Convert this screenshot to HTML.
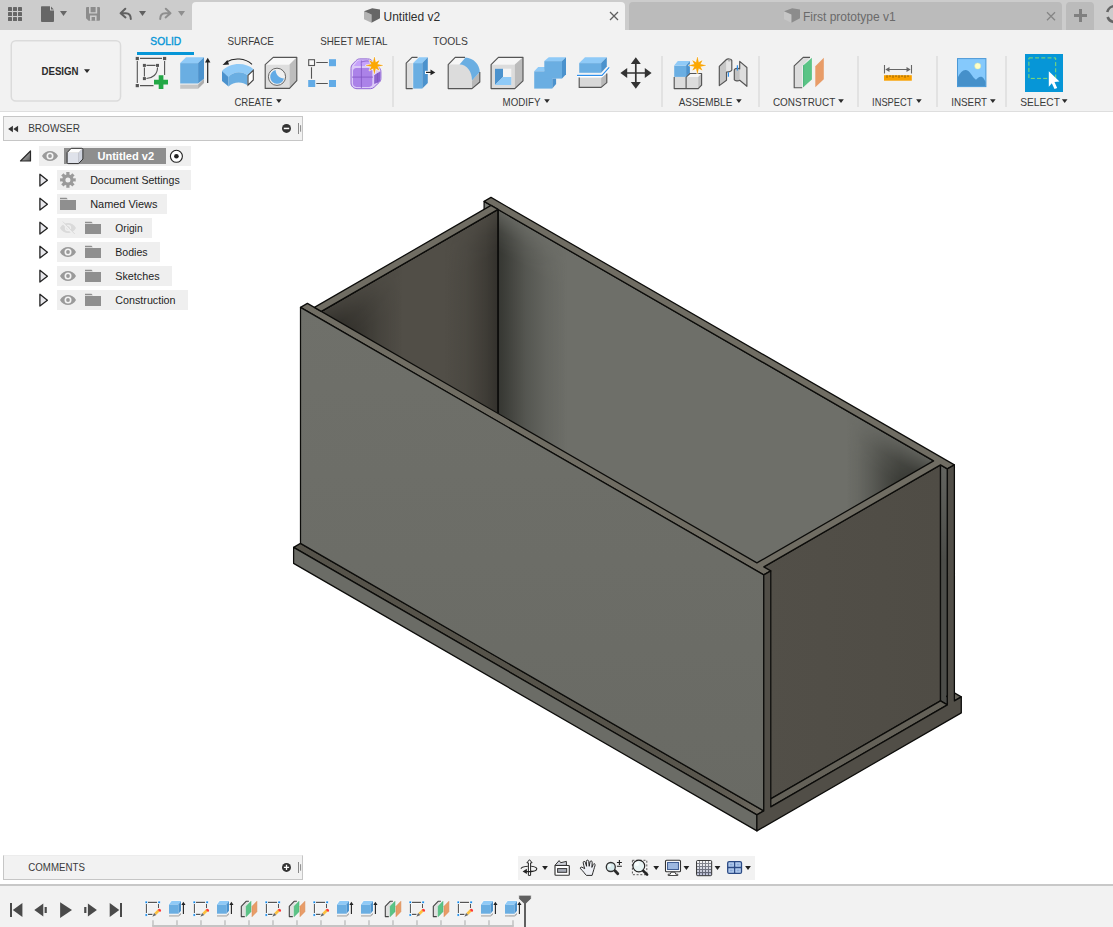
<!DOCTYPE html>
<html lang="en">
<head>
<meta charset="utf-8">
<title>Untitled v2</title>
<style>
*{box-sizing:border-box;margin:0;padding:0}
html,body{width:1113px;height:927px;overflow:hidden;background:#fff}
body{position:relative;font-family:"Liberation Sans",sans-serif;font-size:10.67px;color:#2b2b2b;-webkit-font-smoothing:antialiased}
.abs{position:absolute}
#topbar{position:absolute;left:0;top:0;width:1113px;height:30px;background:#cccccc}
.tab{position:absolute;top:2px;height:28px;border-radius:4px 4px 0 0}
.tab.active{left:192px;width:433px;background:#f2f2f2}
.tab.inactive{left:629px;width:433px;background:#bbbbbb}
.tab.plus{left:1066px;width:28px;background:#bbbbbb}
.tabtitle{position:absolute;top:9.5px;font-size:12px;line-height:14px;white-space:nowrap}
#toolbar{position:absolute;left:0;top:30px;width:1113px;height:82px;background:#f2f2f2;border-bottom:1px solid #dedede}
.wtab{position:absolute;top:6px;font-size:10.67px;line-height:12px;letter-spacing:-0.1px;color:#3a3a3a;white-space:nowrap;transform-origin:0 50%}
.glabel{position:absolute;top:66.5px;font-size:10.67px;line-height:12px;color:#2b2b2b;white-space:nowrap;transform-origin:0 50%}
.dd{position:absolute;width:0;height:0;border-left:3px solid transparent;border-right:3px solid transparent;border-top:4px solid #2b2b2b}
.sep{position:absolute;top:26px;width:2px;height:51px;background:#e2e2e2}
svg{overflow:visible}
.ico{position:absolute;left:0;top:0}
#browserhdr{position:absolute;left:3px;top:116px;width:300px;height:25px;background:#f2f2f2;border:1px solid #c6c6c6}
.row{position:absolute;left:57px;height:20px;background:#efefef}
.rowtxt{position:absolute;font-size:10.67px;line-height:12px;color:#1e1e1e;white-space:nowrap}
#comments{position:absolute;left:3px;top:855px;width:300px;height:25px;background:#f2f2f2;border:1px solid #c6c6c6;border-top-color:#ececec}
#navbar{position:absolute;left:518px;top:856px;width:237px;height:24px;background:#f2f2f2}
#timeline{position:absolute;left:0;top:884px;width:1113px;height:43px;background:#f2f2f2;border-top:2px solid #c8c8c8}
.hdrtxt{position:absolute;font-size:10.67px;line-height:12px;color:#3a3a3a;white-space:nowrap;transform-origin:0 50%}
</style>
</head>
<body>
<div id="topbar">
  <div class="tab active"></div>
  <div class="tab inactive"></div>
  <div class="tab plus"></div>
  <div class="tabtitle" style="left:383.5px;color:#2e2e2e">Untitled v2</div>
  <div class="tabtitle" style="left:803px;color:#6a6a6a">First prototype v1</div>
  <svg class="ico" width="1113" height="30" viewBox="0 0 1113 30">
    <!-- app grid -->
    <g fill="#666">
      <rect x="8" y="7" width="4" height="4" rx=".6"/><rect x="13" y="7" width="4" height="4" rx=".6"/><rect x="18" y="7" width="4" height="4" rx=".6"/>
      <rect x="8" y="12" width="4" height="4" rx=".6"/><rect x="13" y="12" width="4" height="4" rx=".6"/><rect x="18" y="12" width="4" height="4" rx=".6"/>
      <rect x="8" y="17" width="4" height="4" rx=".6"/><rect x="13" y="17" width="4" height="4" rx=".6"/><rect x="18" y="17" width="4" height="4" rx=".6"/>
    </g>
    <!-- file -->
    <path fill="#666" d="M42 6.2h8v4.2h4V21a.9.9 0 0 1-.9.9H41.9A.9.9 0 0 1 41 21V7.1a.9.9 0 0 1 1-.9z"/>
    <path fill="#666" d="M51 6.6l2.8 2.9H51z"/>
    <path fill="#666" d="M60 11h7l-3.5 5z"/>
    <!-- save -->
    <path fill="#8c8c8c" d="M87 7h12a1 1 0 0 1 1 1v11.8a1 1 0 0 1-1 1H88.6L86 18.3V8a1 1 0 0 1 1-1z"/>
    <path fill="#cccccc" d="M89 7h1.6v5.2h5V7H97.2v6.6H89zM90 15.4h6.6v5.4H95v-3.9h-3.4v3.9H90z"/>
    <!-- undo -->
    <path fill="none" stroke="#606060" stroke-width="2" stroke-linecap="round" stroke-linejoin="round" d="M125.3 8.8l-4.7 4.4 4.9 4.2M121.2 13.2h4.6c3 0 5 2.2 5 5.9"/>
    <path fill="#606060" d="M139 11h7l-3.5 5z"/>
    <!-- redo -->
    <path fill="none" stroke="#8e8e8e" stroke-width="2" stroke-linecap="round" stroke-linejoin="round" d="M165.8 8.8l4.7 4.4-4.9 4.2M169.8 13.2h-4.6c-3 0-5 2.2-5 5.9"/>
    <path fill="#8e8e8e" d="M178 11h7l-3.5 5z"/>
    <!-- active tab cube -->
    <g>
      <path fill="#b4b4b4" d="M364 11.2l7.5 3.3v8.3L364 19.3z"/>
      <path fill="#666" d="M364 11.2l8.2-3 7.8 1.4-8.5 4.9zM371.5 14.5l8.5-4.9v8.6l-8.5 4.6z"/>
    </g>
    <!-- inactive tab cube -->
    <g>
      <path fill="#c6c6c6" d="M784 11.2l7.5 3.3v8.3L784 19.3z"/>
      <path fill="#8c8c8c" d="M784 11.2l8.2-3 7.8 1.4-8.5 4.9zM791.5 14.5l8.5-4.9v8.6l-8.5 4.6z"/>
    </g>
    <!-- close x -->
    <path stroke="#5e5e5e" stroke-width="1.25" fill="none" d="M610 12l8 8M618 12l-8 8"/>
    <path stroke="#858585" stroke-width="1.3" fill="none" d="M1047 12.3l8 8M1055 12.3l-8 8"/>
    <!-- plus -->
    <path fill="#808080" d="M1079 9h3v5h5v3h-5v5h-3v-5h-5v-3h5z"/>
    <!-- partial refresh icon -->
    <circle cx="1115" cy="14" r="8" fill="none" stroke="#666" stroke-width="2.6" stroke-dasharray="22 5"/>
  </svg>
</div>
<svg id="model" width="1113" height="927" viewBox="0 0 1113 927" style="position:absolute;left:0;top:0">
<defs>
<linearGradient id="aoBackX" gradientUnits="userSpaceOnUse" x1="497.5" y1="0" x2="933.6" y2="0">
<stop offset="0" stop-color="#1c1d19" stop-opacity=".7"/><stop offset="0.02" stop-color="#1c1d19" stop-opacity=".58"/><stop offset="0.065" stop-color="#1c1d19" stop-opacity=".3"/><stop offset="0.11" stop-color="#1c1d19" stop-opacity=".12"/><stop offset="0.16" stop-color="#1c1d19" stop-opacity="0"/>
<stop offset="0.80" stop-color="#1c1d19" stop-opacity="0"/><stop offset="0.825" stop-color="#1c1d19" stop-opacity=".07"/><stop offset="0.855" stop-color="#1c1d19" stop-opacity=".22"/><stop offset="0.89" stop-color="#1c1d19" stop-opacity=".44"/><stop offset="0.925" stop-color="#1c1d19" stop-opacity=".64"/><stop offset="0.96" stop-color="#1c1d19" stop-opacity=".76"/><stop offset="1" stop-color="#1c1d19" stop-opacity=".82"/>
</linearGradient>
<linearGradient id="aoLeftX" gradientUnits="userSpaceOnUse" x1="321.4" y1="0" x2="497.9" y2="0">
<stop offset="0" stop-color="#161512" stop-opacity=".78"/><stop offset="0.1" stop-color="#161512" stop-opacity=".62"/><stop offset="0.22" stop-color="#161512" stop-opacity=".4"/><stop offset="0.34" stop-color="#161512" stop-opacity=".16"/><stop offset="0.46" stop-color="#161512" stop-opacity="0"/>
<stop offset="0.7" stop-color="#161512" stop-opacity="0"/><stop offset="0.82" stop-color="#161512" stop-opacity=".1"/><stop offset="0.93" stop-color="#161512" stop-opacity=".3"/><stop offset="1" stop-color="#161512" stop-opacity=".5"/>
</linearGradient>
<linearGradient id="mgB" gradientUnits="userSpaceOnUse" x1="933.6" y1="461.9" x2="916.1" y2="492.2">
<stop offset="0" stop-color="#3c3c3c"/><stop offset="0.5" stop-color="#c8c8c8"/><stop offset="1" stop-color="#fff"/>
</linearGradient>
<linearGradient id="mgL" gradientUnits="userSpaceOnUse" x1="321.4" y1="311.5" x2="339.4" y2="342.7">
<stop offset="0" stop-color="#4a4a4a"/><stop offset="0.5" stop-color="#c8c8c8"/><stop offset="1" stop-color="#fff"/>
</linearGradient>
<mask id="mB" maskUnits="userSpaceOnUse" x="0" y="0" width="1113" height="927"><rect width="1113" height="927" fill="url(#mgB)"/></mask>
<mask id="mL" maskUnits="userSpaceOnUse" x="0" y="0" width="1113" height="927"><rect width="1113" height="927" fill="url(#mgL)"/></mask>
<linearGradient id="gRec" gradientUnits="userSpaceOnUse" x1="0" y1="466" x2="0" y2="560"><stop offset="0" stop-color="#63645f"/><stop offset="1" stop-color="#4c4d49"/></linearGradient>
<linearGradient id="gStrip" gradientUnits="userSpaceOnUse" x1="764" y1="0" x2="640" y2="0"><stop offset="0" stop-color="#736f65"/><stop offset="0.2" stop-color="#635f56"/><stop offset="0.55" stop-color="#59564d"/><stop offset="1" stop-color="#56534a"/></linearGradient>
<linearGradient id="gFront" gradientUnits="userSpaceOnUse" x1="0" y1="300" x2="0" y2="820">
<stop offset="0" stop-color="#6f706a"/><stop offset="1" stop-color="#696a64"/>
</linearGradient>
<linearGradient id="gRight" gradientUnits="userSpaceOnUse" x1="764" y1="0" x2="941" y2="0">
<stop offset="0" stop-color="#524f48"/><stop offset="1" stop-color="#4f4c45"/>
</linearGradient>
</defs>
<g stroke="#0c0c0a" stroke-width="1.25" stroke-linejoin="round" stroke-linecap="round">
<polygon fill="#6e6f69" points="933.6,696.9 498.0,445.4 498.0,209.4 933.6,460.9"/>
<polygon fill="url(#aoBackX)" stroke="none" mask="url(#mB)" points="933.6,696.9 498.0,445.4 498.0,209.4 933.6,460.9"/>
<polygon fill="#514e47" points="321.3,547.4 498.0,445.4 498.0,209.4 321.3,311.4"/>
<polygon fill="url(#aoLeftX)" stroke="none" mask="url(#mL)" points="321.3,547.4 498.0,445.4 498.0,209.4 321.3,311.4"/>
<polygon fill="none" points="321.3,547.4 498.0,445.4 498.0,209.4 321.3,311.4"/>
<polygon fill="#7a7c77" points="484.1,201.4 491.0,205.4 491.0,213.4 484.1,217.4"/>
<polygon fill="url(#gRight)" points="763.8,802.9 940.5,700.9 940.5,464.9 763.8,566.9"/>
<polygon fill="url(#gRec)" points="947.4,704.9 940.5,700.9 940.5,464.9 947.4,468.9"/>
<polygon fill="#646158" points="770.8,806.9 763.8,802.9 940.5,700.9 947.4,704.9"/>
<polygon fill="#6a675e" points="961.3,696.9 954.4,700.9 946.6,696.4 953.5,692.4"/>
<polygon fill="url(#gStrip)" points="756.9,814.9 293.6,547.4 300.5,543.4 763.8,810.9"/>
<polygon fill="#706d63" points="763.8,574.9 300.5,307.4 307.4,303.4 756.9,562.9 933.6,460.9 484.1,201.4 491.0,197.4 954.4,464.9 947.4,468.9 940.5,464.9 763.8,566.9 770.8,570.9"/>
<polygon fill="#706d63" points="321.3,311.4 314.4,307.4 491.0,205.4 498.0,209.4"/>
<polygon fill="url(#gFront)" points="763.8,810.9 300.5,543.4 300.5,307.4 763.8,574.9"/>
<polygon fill="#6b6c66" points="756.9,830.9 293.6,563.4 293.6,547.4 756.9,814.9"/>
<polygon fill="#514e47" points="756.9,830.9 961.3,712.9 961.3,696.9 954.4,700.9 954.4,464.9 947.4,468.9 947.4,704.9 770.8,806.9 770.8,570.9 763.8,574.9 763.8,810.9 756.9,814.9"/>
</g></svg>
<div id="toolbar">
    <div class="abs" style="left:137px;top:21.500px;width:57px;height:3px;background:#0696d7"></div>
  <div class="sep" style="left:392px"></div>
  <div class="sep" style="left:661px"></div>
  <div class="sep" style="left:758px"></div>
  <div class="sep" style="left:857px"></div>
  <div class="sep" style="left:936px"></div>
  <div class="sep" style="left:1005px"></div>
  <div class="abs" style="left:1025px;top:24px;width:38px;height:38px;background:#0696d7"></div>
</div>
<svg class="ico" width="1113" height="112" viewBox="0 0 1113 112" font-family="Liberation Sans, sans-serif" font-size="10.67">
  <rect x="11.250" y="40.750" width="109.300" height="60.300" rx="4.500" fill="none" stroke="#dbdbdb" stroke-width="1.500"/>
  <g fill="#3a3a3a">
    <text x="41.500" y="75.300" font-weight="bold" font-size="11.300" fill="#2b2b2b" textLength="37" lengthAdjust="spacingAndGlyphs">DESIGN</text>
    <text x="150.300" y="44.900" fill="#0696d7" stroke="#0696d7" stroke-width=".35" textLength="30.900" lengthAdjust="spacingAndGlyphs">SOLID</text>
    <text x="227.400" y="44.900" textLength="46.400" lengthAdjust="spacingAndGlyphs">SURFACE</text>
    <text x="320.200" y="44.900" textLength="67.400" lengthAdjust="spacingAndGlyphs">SHEET METAL</text>
    <text x="433.100" y="44.900" textLength="34.700" lengthAdjust="spacingAndGlyphs">TOOLS</text>
    <text x="234.400" y="105.900" textLength="38.100" lengthAdjust="spacingAndGlyphs">CREATE</text>
    <text x="502.600" y="105.900" textLength="37.800" lengthAdjust="spacingAndGlyphs">MODIFY</text>
    <text x="678.700" y="105.900" textLength="53.600" lengthAdjust="spacingAndGlyphs">ASSEMBLE</text>
    <text x="772.900" y="105.900" textLength="62.400" lengthAdjust="spacingAndGlyphs">CONSTRUCT</text>
    <text x="872.100" y="105.900" textLength="40.300" lengthAdjust="spacingAndGlyphs">INSPECT</text>
    <text x="951.200" y="105.900" textLength="35.900" lengthAdjust="spacingAndGlyphs">INSERT</text>
    <text x="1020.200" y="105.900" textLength="39.700" lengthAdjust="spacingAndGlyphs">SELECT</text>
  </g>
  <g fill="#2b2b2b">
    <path d="M84 69.300h6l-3 3.600z"/>
    <path d="M276.100 99.300h5.600l-2.800 3.600z"/><path d="M544.200 99.300h5.600l-2.800 3.600z"/><path d="M736.100 99.300h5.600l-2.800 3.600z"/>
    <path d="M838.200 99.300h5.600l-2.800 3.600z"/><path d="M916.100 99.300h5.600l-2.800 3.600z"/><path d="M990 99.300h5.600l-2.800 3.600z"/><path d="M1061.900 99.300h5.600l-2.800 3.600z"/>
  </g>
<g stroke="#555" stroke-width="1.100" fill="none">
<path d="M140 58.400h22M137.300 61v22M140 85.600h13.500M164.600 61v14"/>
<path d="M146.500 65.400h9M144.400 67.500v9M157.500 67.500c0 7-5 10.600-11 11"/></g>
<g fill="#555"><rect x="135.700" y="56.900" width="3.200" height="3.200"/><rect x="163" y="56.900" width="3.200" height="3.200"/><rect x="135.700" y="84" width="3.200" height="3.200"/>
<rect x="142.900" y="63.900" width="3" height="3"/><rect x="156" y="63.900" width="3" height="3"/><rect x="142.900" y="77.100" width="3" height="3"/></g>
<path fill="#22a845" d="M158.700 75.200h4.700v4.500h4.600v4.700h-4.600v4.500h-4.700v-4.500h-4.700v-4.700h4.700z"/>
<path fill="#c6c6c6" d="M180.200 84.600h17.900v4.200h-17.900z"/><path fill="#adadad" d="M198.100 84.600l5.900-5.800v4.200l-5.900 5.800z"/>
<path fill="#6aaee2" d="M180.200 63.100h17.900v20.400h-17.900z"/><path fill="#8fcaf7" d="M180.200 63.100l5.800-5.800h18l-5.900 5.800z"/><path fill="#4b92cd" d="M198.100 63.100l5.900-5.800v21.500l-5.900 4.700z"/>
<path stroke="#222" stroke-width="1.200" fill="none" d="M207.700 83V60"/><path fill="#222" d="M207.700 57.800l2.700 4.800h-5.400z"/>
<path fill="#8fcaf7" d="M222 71c8-9 24-9 31.800-1.500l-6.300 6c-5-4.500-14-4.500-19 1.500z"/>
<path fill="#4b92cd" d="M222 71l6.500 6v9.500l-6.500-5.500z"/>
<path fill="#6aaee2" d="M228.500 77c5-6 14-6 19-1.500v9.800c-5-4-14-4-19 1.200z"/>
<path fill="#fff" stroke="#444" stroke-width="1.100" d="M248 75.300l5.300-5v9.700l-5.300 5.200z"/>
<path fill="none" stroke="#222" stroke-width="1.100" d="M252 64.300c-7-6.200-18-7-25.500-2.300"/><path fill="#222" d="M222.600 64.900l4.800-5 1.700 4.600z"/>
<path fill="#dedede" d="M265.200 64.600h24.300v23.800h-24.300z"/><path fill="#f8f8f8" d="M265.200 64.600l8-7.300h23.600l-7.300 7.300z"/><path fill="#bdbdbd" d="M289.500 64.600l7.300-7.300v23.300l-7.300 7.800z"/>
<path fill="none" stroke="#555" stroke-width="1.150" stroke-linejoin="round" d="M265.200 64.600l8-7.300h23.600v23.300l-7.300 7.800h-24.300z"/>
<circle cx="277" cy="76.800" r="8.600" fill="#f0f0f0" stroke="#666" stroke-width="1"/>
<path fill="#62abe6" d="M275.600 70a7 7 0 1 0 8.400 8.500c-4.700-.3-8.300-3.800-8.400-8.500z"/>
<g stroke="#555" stroke-width="1.100" fill="none"><path d="M316.300 62.500h11.500M311.500 67.200v11.500M316.300 83.500h11.500"/></g>
<rect x="308.700" y="59.700" width="5.800" height="5.800" fill="#fafafa" stroke="#555" stroke-width="1.100"/>
<g fill="#62abe6"><rect x="329" y="59.200" width="7" height="7"/><rect x="308.200" y="80" width="7" height="7"/><rect x="329" y="80" width="7" height="7"/></g>
<path fill="#dccaf8" stroke="#9064d4" stroke-width="1" stroke-linejoin="round" d="M359.500 58.900h8c1.500 0 2.500.3 3.500 1l8 7.500c1.200 1.200 1.900 2.500 1.900 4.200v7c0 1.500-.6 2.800-1.700 3.800l-5 4.800c-1 1-2.300 1.500-3.800 1.500h-13.400c-3.300 0-6-2.500-6-5.800v-14.500c0-1.800.6-3.200 1.800-4.400l3.200-3.300c1-1.100 2.100-1.800 3.500-1.800z"/>
<path fill="#c6a2fa" d="M360 60.200h7.300c1.200 0 2 .3 2.800 1l5 4.700h-21.200l2.800-3.900c.8-1.100 1.900-1.800 3.300-1.800z"/>
<path fill="#ab82e8" d="M353 71c0-1.800 1.400-3.100 3.200-3.100h13c1.800 0 3.100 1.300 3.100 3.100v12.800c0 1.800-1.300 3.100-3.100 3.100h-13c-1.800 0-3.200-1.300-3.200-3.100z"/>
<path fill="#8c63cf" d="M374.200 75l6-3.600v8.300c0 1-.3 1.700-1 2.400l-5 1.800z"/>
<path fill="none" stroke="#8156c4" stroke-width=".8" d="M361.400 60.500c-.3 2-.1 3.500 0 5.500v22M352 77.100h21M377.500 73v9.500M361.600 62c3-1.200 6-1.300 9-.7"/>
<path fill="none" stroke="#fff" stroke-opacity=".75" stroke-width="1.800" stroke-linejoin="round" d="M374.40 57.10 L375.59 62.54 L379.21 60.59 L377.26 64.21 L382.70 65.40 L377.26 66.59 L379.21 70.21 L375.59 68.26 L374.40 73.70 L373.21 68.26 L369.59 70.21 L371.54 66.59 L366.10 65.40 L371.54 64.21 L369.59 60.59 L373.21 62.54Z"/><path fill="#fda800" stroke="#ea9600" stroke-width=".35" d="M374.40 57.10 L375.59 62.54 L379.21 60.59 L377.26 64.21 L382.70 65.40 L377.26 66.59 L379.21 70.21 L375.59 68.26 L374.40 73.70 L373.21 68.26 L369.59 70.21 L371.54 66.59 L366.10 65.40 L371.54 64.21 L369.59 60.59 L373.21 62.54Z"/>
<path fill="#dedede" d="M406.200 63.100h6.500v25.500h-6.500z"/><path fill="#f4f4f4" d="M406.200 63.100l5.800-5.800h5.500l-4.800 5.800z"/>
<path fill="none" stroke="#555" stroke-width="1.150" stroke-linejoin="round" d="M412.700 88.600h-6.500v-25.500l5.800-5.800h5.500"/>
<path fill="#6aaee2" d="M413.200 63.100h9.100v25.500h-9.100z"/><path fill="#8fcaf7" d="M413.200 63.100l5.800-5.800h8.800l-5.500 5.800z"/><path fill="#4b92cd" d="M422.300 63.100l5.500-5.800v25.700l-5.500 5.600z"/>
<path fill="#fff" d="M425 70.800h6v3.200h-6z"/><path stroke="#222" stroke-width="1.200" d="M426 72.400h6"/><path fill="#222" d="M435.300 72.400l-4.800 2.800v-5.600z"/>
<path fill="#b8b8b8" d="M472 80.500l7.800-8.500v10l-7.800 6.600z"/>
<path fill="#f6f6f6" d="M448.200 64.600l7-7.300h10l-5 7.300z"/>
<path fill="#dcdcdc" d="M448.200 64.600h11c7.500 0 12.800 6 12.800 14v10h-23.800z"/>
<path fill="#6aaee2" d="M459.500 64.400l6-7c8 .5 14.300 7 14.300 14.600l-7.800 8.500c0-9-5-16-12.500-16.100z"/>
<path fill="none" stroke="#555" stroke-width="1.150" stroke-linejoin="round" d="M465 57.300h-9.800l-7 7.300v24h23.800l7.800-6.600v-10"/>
<path fill="#dcdcdc" d="M491.100 64.600h23.700v24h-23.700z"/><path fill="#f6f6f6" d="M491.100 64.600l7.300-7.300h24.600l-8.200 7.300z"/><path fill="#bcbcbc" d="M514.800 64.600l8.200-7.300v23.500l-8.200 7.800z"/>
<path fill="none" stroke="#555" stroke-width="1.150" stroke-linejoin="round" d="M491.100 64.600l7.300-7.300h24.600v23.500l-8.200 7.800h-23.700z"/>
<path fill="#f4f4f4" d="M495 68.700h16.300v16.300h-16.300z"/><path fill="#4b92cd" d="M495 68.700h8v8.300l-8 8z"/><path fill="#8fcaf7" d="M503 77h8.300v8h-16.300z"/>
<path fill="#8fcaf7" d="M534.200 71.300l4-4.300h7l-1 4.300z"/><path fill="#6aaee2" d="M534.200 71.300h18.100v17.300h-18.100z"/><path fill="#4b92cd" d="M552.300 78.600h3.800v5.500l-3.800 4.500z"/>
<path fill="#6aaee2" d="M544.300 61.100h17.700v17.500h-17.700z"/><path fill="#8fcaf7" d="M544.300 61.100l4.500-3.800h17.200l-4 3.800z"/><path fill="#4b92cd" d="M562 61.100l4-3.800v16.900l-4 4.400z"/>
<path fill="#d8d8d8" d="M579.200 77.900h21.900v9.500h-21.900z"/><path fill="#b8b8b8" d="M601.100 77.900l5.700-4.500v9.200l-5.700 4.800z"/>
<path fill="none" stroke="#555" stroke-width="1.150" stroke-linejoin="round" d="M579.200 77.500v9.900h21.900l5.700-4.800v-9"/>
<path fill="#6aaee2" d="M579.200 63.100h21.900v9.700h-21.900z"/><path fill="#8fcaf7" d="M579.200 63.100l5.800-5.800h21.800l-5.700 5.800z"/><path fill="#4b92cd" d="M601.100 63.100l5.700-5.800v9.300l-5.700 6.200z"/>
<path fill="none" stroke="#fff" stroke-width="3" d="M577 75.400h25l7.200-8"/><path fill="none" stroke="#2f8fea" stroke-width="1.200" d="M577 75.400h25l7.200-8"/>
<path stroke="#333" stroke-width="1.700" fill="none" d="M635.800 62v22M625 73h22"/>
<path fill="#333" d="M635.800 57.300l5 6.700h-10zM635.800 88.700l5-6.700h-10zM620.400 73l6.800-5v10zM651.600 73l-6.800-5v10z"/>
<path fill="#dcdcdc" d="M674.200 76.900h11.900v11.700h-11.900zM686.100 77h12.100v11.600h-12.100z"/>
<path fill="#f6f6f6" d="M686.100 77l3.800-3.500h11.700l-3.400 3.500z"/><path fill="#c0c0c0" d="M698.200 77l3.400-3.500v11.700l-3.400 3.400z"/>
<path fill="none" stroke="#555" stroke-width="1.150" stroke-linejoin="round" d="M674.200 76.900v11.700h24l3.400-3.400v-11.700h-11.700l-3.800 3.500v11.500"/>
<path fill="#6aaee2" d="M674.200 65.600h11.900v11.300h-11.900z"/><path fill="#8fcaf7" d="M674.200 65.600l3.600-4.500h12.100l-3.800 4.500z"/><path fill="#4b92cd" d="M686.100 65.600l3.800-4.500v11.300l-3.800 4.500z"/>
<path fill="none" stroke="#fff" stroke-opacity=".75" stroke-width="1.800" stroke-linejoin="round" d="M697.40 57.10 L698.59 62.54 L702.21 60.59 L700.26 64.21 L705.70 65.40 L700.26 66.59 L702.21 70.21 L698.59 68.26 L697.40 73.70 L696.21 68.26 L692.59 70.21 L694.54 66.59 L689.10 65.40 L694.54 64.21 L692.59 60.59 L696.21 62.54Z"/><path fill="#fda800" stroke="#ea9600" stroke-width=".35" d="M697.40 57.10 L698.59 62.54 L702.21 60.59 L700.26 64.21 L705.70 65.40 L700.26 66.59 L702.21 70.21 L698.59 68.26 L697.40 73.70 L696.21 68.26 L692.59 70.21 L694.54 66.59 L689.10 65.40 L694.54 64.21 L692.59 60.59 L696.21 62.54Z"/>
<path fill="#c6c6c6" d="M719.300 66.300l7.200-6.800v20.800l-7.200 5.300z"/>
<path fill="#e4e4e4" d="M726.500 59.500c1.500-1.200 4.800-.8 5.300 1v9.500c-.8 1.600-4 2-5.300 2z"/>
<ellipse cx="729.300" cy="60.700" rx="1.600" ry=".7" fill="#aaa"/>
<path fill="none" stroke="#555" stroke-width="1.150" stroke-linejoin="round" d="M719.300 66.300l6.600-6.300c1.800-1.700 5.400-1.200 5.900 .5v9.500c-.8 1.600-3.500 2-5.300 2v8.300l-7.200 5.300z"/>
<path fill="#dedede" d="M739.700 61.400l7.200 6.100v18.800l-7.200-6z"/>
<path fill="#c2c2c2" d="M734.300 69.700c.8-1.500 4.600-1.700 5.400-.2v10.800c-.8 1-4.600 1-5.400-.5z"/>
<path fill="none" stroke="#555" stroke-width="1.150" stroke-linejoin="round" d="M739.700 69v-7.600l7.200 6.100v18.800l-7.200-6c-1.500 1-4.600.8-5.400-.5v-10.100c.8-1.500 4.600-1.700 5.400-.7z"/>
<path stroke="#2f8fea" stroke-width="1.200" d="M728.400 72.300v4.400M737.400 65.200v5.300"/>
<path fill="#dcdcdc" d="M794.200 65.900l9-8.500h7.100l-8.100 8.500v21.800h-8z"/>
<path fill="none" stroke="#555" stroke-width="1.150" stroke-linejoin="round" d="M810 57.400h-6.800l-9 8.500v21.800h8"/>
<path fill="#5bc486" d="M803.200 65.500l8.700-7.800v21.900l-8.700 7.700z"/><path fill="#45b277" d="M803.200 65.500l.9-.8v21.800l-.9.800z"/>
<path fill="#e89c68" d="M815.300 66.200l8.500-8.500v21.500l-8.500 8.100z"/>
<rect x="884" y="75.200" width="27.800" height="5.500" fill="#f9a100"/>
<path stroke="#7a4e00" stroke-width=".8" d="M887 75.200v2.600M890 75.200v1.800M893 75.200v2.600M896 75.200v1.800M899 75.200v2.600M902 75.200v1.800M905 75.200v2.600M908 75.200v1.800"/>
<path stroke="#666" stroke-width="1.100" fill="none" d="M884.500 65v8.600M911.500 65v8.600M887 69.500h22"/>
<path fill="#666" d="M885.300 69.500l4.200-2.600v5.200zM910.700 69.500l-4.200-2.600v5.200z"/>
<rect x="957.500" y="58.600" width="28.400" height="28" fill="#85c9fc" stroke="#4a98d6" stroke-width="1"/>
<path fill="#4590ca" d="M958 86v-9c2-4 5-7.500 8-7 4 .5 6 7 10 9.800 1.500-2 3.500-3.600 5.500-3 2 .6 3 3 4 5.200v4z"/>
<circle cx="977.700" cy="66" r="3.100" fill="#ffffc6" stroke="#cfe0b0" stroke-width=".5"/>
<rect x="1028.900" y="57.900" width="26.800" height="20.500" fill="none" stroke="#8de06a" stroke-width=".95" stroke-dasharray="4 2.200"/>
<path fill="#fff" d="M1048.800 71.300l10.700 10.200-5 .6 2.700 5.800-2.700 1.200-2.700-5.900-3 3.500z"/>
</svg>
<div id="browserhdr"></div>
<div class="row" style="left:39px;top:146px;width:152px"></div>
<div class="row" style="left:57px;top:170px;width:134px"></div>
<div class="row" style="left:57px;top:194px;width:110px"></div>
<div class="row" style="left:57px;top:218px;width:95px"></div>
<div class="row" style="left:57px;top:242px;width:103px"></div>
<div class="row" style="left:57px;top:266px;width:115px"></div>
<div class="row" style="left:57px;top:290px;width:131px"></div>
<div class="abs" style="left:64px;top:148px;width:102px;height:16px;background:#8e8e8e"></div>
<svg class="ico" width="320" height="320" viewBox="0 0 320 320" font-family="Liberation Sans, sans-serif" font-size="10.67">
<text x="28.2" y="132" fill="#3a3a3a" textLength="51.8" lengthAdjust="spacingAndGlyphs">BROWSER</text>
<path fill="#333" d="M8.100 129l4.800-3.300v6.600zM13.300 129l4.800-3.300v6.600z"/>
<circle cx="286.500" cy="128.400" r="4.500" fill="#333"/><rect x="283.800" y="127.700" width="5.400" height="1.500" fill="#fff"/>
<path stroke="#888" stroke-width="1" d="M298.500 123v11M300.600 125.200v6.500"/>
<defs><linearGradient id="tri" x1="0" y1="0" x2="1" y2="1"><stop offset="0" stop-color="#d0d0d0"/><stop offset="1" stop-color="#5a5a5a"/></linearGradient></defs>
<path fill="url(#tri)" stroke="#2a2a2a" stroke-width="1.200" stroke-linejoin="round" d="M30.500 151v10h-10z"/>
<path fill="#9a9a9a" d="M42.0 156.0c3.600-6.700 12.400-6.700 16 0c-3.600 6.700-12.400 6.700-16 0z"/>
<circle cx="50.0" cy="156.0" r="3.500" fill="#f4f4f4"/><circle cx="50.0" cy="156.0" r="1.900" fill="#9a9a9a"/>
<path fill="#dfe2ea" d="M67.100 152.800h11.500v10.800h-11.500z"/><path fill="#fdfdfd" d="M67.100 152.800l4.100-4.500h11.700l-4.300 4.500z"/><path fill="#cfd3de" d="M78.600 152.800l4.300-4.500v10.700l-4.300 4.600z"/>
<path fill="none" stroke="#2e2e2e" stroke-width="1" stroke-linejoin="round" d="M67.100 152.600l4.100-4.300h10.700q1 0 1 1v9.700l-4.300 4.600h-10.500q-1 0-1-1z"/>
<text x="97.400" y="159.900" fill="#fff" font-weight="bold" font-size="11" textLength="56.700" lengthAdjust="spacingAndGlyphs">Untitled v2</text>
<circle cx="176.400" cy="156.300" r="6" fill="#fff" stroke="#222" stroke-width="1.100"/><circle cx="176.400" cy="156.300" r="2.300" fill="#222"/>
<path fill="#e9e9ed" stroke="#222" stroke-width="1.300" stroke-linejoin="round" d="M39.900 174.3v11.800l7.500-5.900z"/>
<path fill="#e9e9ed" stroke="#222" stroke-width="1.300" stroke-linejoin="round" d="M39.900 198.3v11.800l7.500-5.900z"/>
<path fill="#e9e9ed" stroke="#222" stroke-width="1.300" stroke-linejoin="round" d="M39.900 222.3v11.800l7.500-5.900z"/>
<path fill="#e9e9ed" stroke="#222" stroke-width="1.300" stroke-linejoin="round" d="M39.900 246.3v11.800l7.500-5.900z"/>
<path fill="#e9e9ed" stroke="#222" stroke-width="1.300" stroke-linejoin="round" d="M39.900 270.3v11.800l7.500-5.900z"/>
<path fill="#e9e9ed" stroke="#222" stroke-width="1.300" stroke-linejoin="round" d="M39.900 294.3v11.800l7.500-5.900z"/>
<path fill="#9a9a9a" d="M72.47 178.44 L75.72 178.23 L75.72 181.57 L72.47 181.36Z M72.17 182.10 L74.62 184.25 L72.25 186.62 L70.10 184.17Z M69.36 184.47 L69.57 187.72 L66.23 187.72 L66.44 184.47Z M65.70 184.17 L63.55 186.62 L61.18 184.25 L63.63 182.10Z M63.33 181.36 L60.08 181.57 L60.08 178.23 L63.33 178.44Z M63.63 177.70 L61.18 175.55 L63.55 173.18 L65.70 175.63Z M66.44 175.33 L66.23 172.08 L69.57 172.08 L69.36 175.33Z M70.10 175.63 L72.25 173.18 L74.62 175.55 L72.17 177.70Z "/>
<circle cx="67.9" cy="179.9" r="4.100" fill="none" stroke="#9a9a9a" stroke-width="3.200"/>
<path fill="#8f8f8f" d="M60.0 197.7h6.500l1.300 1.500h-7.800zM60.0 200.0h16v10h-16z"/>
<path fill="#8f8f8f" d="M85.0 221.7h6.500l1.300 1.500h-7.800zM85.0 224.0h16v10h-16z"/>
<path fill="#8f8f8f" d="M85.0 245.7h6.500l1.300 1.500h-7.800zM85.0 248.0h16v10h-16z"/>
<path fill="#8f8f8f" d="M85.0 269.7h6.500l1.300 1.500h-7.800zM85.0 272.0h16v10h-16z"/>
<path fill="#8f8f8f" d="M85.0 293.7h6.500l1.300 1.500h-7.800zM85.0 296.0h16v10h-16z"/>
<g opacity=".55"><path fill="#c9c9c9" d="M60 228c3.600-6.700 12.400-6.700 16 0c-3.600 6.700-12.400 6.700-16 0z"/><circle cx="68" cy="228" r="3.200" fill="#efefef"/><circle cx="68" cy="228" r="1.800" fill="#c9c9c9"/><path stroke="#efefef" stroke-width="2.200" d="M62 222l12 12.500"/><path stroke="#c9c9c9" stroke-width="1" d="M62.800 221.500l12 12.500"/></g>
<path fill="#9a9a9a" d="M60.0 252.0c3.600-6.700 12.400-6.700 16 0c-3.600 6.700-12.400 6.700-16 0z"/>
<circle cx="68.0" cy="252.0" r="3.500" fill="#f4f4f4"/><circle cx="68.0" cy="252.0" r="1.900" fill="#9a9a9a"/>
<path fill="#9a9a9a" d="M60.0 276.0c3.600-6.700 12.400-6.700 16 0c-3.600 6.700-12.400 6.700-16 0z"/>
<circle cx="68.0" cy="276.0" r="3.500" fill="#f4f4f4"/><circle cx="68.0" cy="276.0" r="1.900" fill="#9a9a9a"/>
<path fill="#9a9a9a" d="M60.0 300.0c3.600-6.700 12.400-6.700 16 0c-3.600 6.700-12.400 6.700-16 0z"/>
<circle cx="68.0" cy="300.0" r="3.500" fill="#f4f4f4"/><circle cx="68.0" cy="300.0" r="1.900" fill="#9a9a9a"/>
<text x="90.2" y="183.6" fill="#1e1e1e" textLength="89.5" lengthAdjust="spacingAndGlyphs">Document Settings</text>
<text x="90.2" y="207.6" fill="#1e1e1e" textLength="67.3" lengthAdjust="spacingAndGlyphs">Named Views</text>
<text x="115.3" y="231.6" fill="#1e1e1e" textLength="27.3" lengthAdjust="spacingAndGlyphs">Origin</text>
<text x="115.3" y="255.6" fill="#1e1e1e" textLength="32.3" lengthAdjust="spacingAndGlyphs">Bodies</text>
<text x="115.3" y="279.6" fill="#1e1e1e" textLength="44.3" lengthAdjust="spacingAndGlyphs">Sketches</text>
<text x="115.3" y="303.6" fill="#1e1e1e" textLength="60.2" lengthAdjust="spacingAndGlyphs">Construction</text>
</svg>
<div id="comments"></div>
<svg class="ico" style="top:850px" width="320" height="40" viewBox="0 850 320 40" font-family="Liberation Sans, sans-serif" font-size="10.67">
<text x="28.300" y="870.800" fill="#3a3a3a" textLength="56.600" lengthAdjust="spacingAndGlyphs">COMMENTS</text>
<circle cx="286.500" cy="867.400" r="4.500" fill="#333"/><path stroke="#fff" stroke-width="1.300" d="M283.900 867.400h5.200M286.500 864.800v5.200"/>
<path stroke="#888" stroke-width="1" d="M298.500 862v11M300.600 864.200v6.500"/>
</svg>
<div id="navbar"></div>
<svg class="ico" style="left:510px;top:850px" width="260" height="36" viewBox="510 850 260 36">
<path fill="#222" d="M542.1 866.100h5.800l-2.900 3.800z"/>
<path fill="#222" d="M653.3 866.100h5.800l-2.900 3.800z"/>
<path fill="#222" d="M683.5 866.100h5.800l-2.900 3.800z"/>
<path fill="#222" d="M714.6 866.100h5.800l-2.900 3.800z"/>
<path fill="#222" d="M745.1 866.100h5.800l-2.900 3.800z"/>
<path fill="none" stroke="#222" stroke-width="1.100" d="M527.800 866.200c-4 .3-6.700 1.300-6.700 2.600M531.200 866.200c3.300.4 5.600 1.400 5.600 2.600 0 1.600-3.500 2.800-7.800 2.800-1.500 0-3-.1-4.200-.4"/>
<path fill="#222" d="M522.600 871.500l4.300-2.700v5.300z"/>
<path fill="#fff" stroke="#222" stroke-width="1" stroke-linejoin="round" d="M528.400 875.400v-12.600h-1.500l2.600-3.100 2.600 3.100h-1.500v12.600z"/>
<path fill="none" stroke="#222" stroke-width="1.100" d="M526 871.500c1 .1 2 .1 3 .1 1 0 2 0 3-.2"/>
<path fill="#d0d3da" stroke="#333" stroke-width="1" stroke-linejoin="round" d="M554.900 865.400l4.200-4.800 1.600 2.100 5.700-1.300v4z"/>
<rect x="555" y="865.500" width="14.300" height="9.700" rx=".8" fill="#fff" stroke="#333" stroke-width="1.150"/><rect x="557.600" y="868.600" width="9.100" height="3.700" fill="#a8adb8" stroke="#333" stroke-width="1"/>
<path fill="#eef0f5" stroke="#222" stroke-width=".95" stroke-linejoin="round" d="M586.400 875.400c-1.500-1.500-3.500-4.500-5.700-6.500-1-1 0-2.200 1.300-1.700l2.700 1.500c-.6-2-1.300-4.300-1.500-6-.2-1.500 1.700-1.800 2.100-.4l1.300 4-.3-5c0-1.500 2.200-1.600 2.400 0l.5 5 .8-4.400c.3-1.500 2.300-1.200 2.200.3l-.3 5.200 1.300-3c.6-1.300 2.300-.6 1.900.8-.8 2.800-1.700 5.700-3 10.200z"/>
<circle cx="610.800" cy="867" r="4.500" fill="#d8eaec" stroke="#333" stroke-width="1.300"/><circle cx="609.500" cy="865.600" r="1.500" fill="#f4fbfb"/><path stroke="#2a2a2a" stroke-width="2.800" stroke-linecap="round" d="M615 870.800l2.800 3"/>
<path stroke="#222" stroke-width="1.100" d="M616.900 862.500h5M619.400 860v5M616.900 866.300h5"/>
<rect x="632.400" y="860.300" width="14.400" height="14.400" fill="none" stroke="#444" stroke-width=".9" stroke-dasharray="2 1.700"/>
<circle cx="638.800" cy="866" r="5.900" fill="#e8f3f3" stroke="#222" stroke-width="1.150"/><circle cx="637" cy="864" r="2" fill="#fafefe"/><path stroke="#222" stroke-width="2.600" stroke-linecap="round" d="M643.300 870.800l3.800 3.800"/>
<rect x="665.500" y="860.300" width="15" height="11.400" rx="1" fill="#fff" stroke="#333" stroke-width="1.100"/><rect x="667.600" y="862.400" width="10.800" height="7.200" fill="#9db8e0" stroke="#2b4a85" stroke-width=".9"/>
<path fill="#fff" stroke="#333" stroke-width=".9" d="M671 872.200h4l.8 2h2v1.300h-9.600v-1.300h2z"/>
<defs><linearGradient id="gg" x1="0" y1="0" x2="0" y2="1"><stop offset="0" stop-color="#8e9096"/><stop offset="1" stop-color="#5a5e70"/></linearGradient></defs>
<rect x="696.500" y="860.500" width="15.200" height="15.200" rx="1.200" fill="url(#gg)" stroke="#3c3c3c" stroke-width="1"/>
<rect x="697.10" y="861.05" width="1.900" height="1.900" fill="#ffffff"/>
<rect x="700.05" y="861.05" width="1.900" height="1.900" fill="#ffffff"/>
<rect x="703.05" y="861.05" width="1.900" height="1.900" fill="#ffffff"/>
<rect x="706.05" y="861.05" width="1.900" height="1.900" fill="#ffffff"/>
<rect x="709.05" y="861.05" width="1.900" height="1.900" fill="#ffffff"/>
<rect x="697.10" y="864.05" width="1.900" height="1.900" fill="#f6f7fa"/>
<rect x="700.05" y="864.05" width="1.900" height="1.900" fill="#f6f7fa"/>
<rect x="703.05" y="864.05" width="1.900" height="1.900" fill="#f6f7fa"/>
<rect x="706.05" y="864.05" width="1.900" height="1.900" fill="#f6f7fa"/>
<rect x="709.05" y="864.05" width="1.900" height="1.900" fill="#f6f7fa"/>
<rect x="697.10" y="867.05" width="1.900" height="1.900" fill="#e6e8f0"/>
<rect x="700.05" y="867.05" width="1.900" height="1.900" fill="#e6e8f0"/>
<rect x="703.05" y="867.05" width="1.900" height="1.900" fill="#e6e8f0"/>
<rect x="706.05" y="867.05" width="1.900" height="1.900" fill="#e6e8f0"/>
<rect x="709.05" y="867.05" width="1.900" height="1.900" fill="#e6e8f0"/>
<rect x="697.10" y="870.05" width="1.900" height="1.900" fill="#d6d9e6"/>
<rect x="700.05" y="870.05" width="1.900" height="1.900" fill="#d6d9e6"/>
<rect x="703.05" y="870.05" width="1.900" height="1.900" fill="#d6d9e6"/>
<rect x="706.05" y="870.05" width="1.900" height="1.900" fill="#d6d9e6"/>
<rect x="709.05" y="870.05" width="1.900" height="1.900" fill="#d6d9e6"/>
<rect x="697.10" y="873.15" width="1.900" height="1.900" fill="#c8cce0"/>
<rect x="700.05" y="873.15" width="1.900" height="1.900" fill="#c8cce0"/>
<rect x="703.05" y="873.15" width="1.900" height="1.900" fill="#c8cce0"/>
<rect x="706.05" y="873.15" width="1.900" height="1.900" fill="#c8cce0"/>
<rect x="709.05" y="873.15" width="1.900" height="1.900" fill="#c8cce0"/>
<rect x="727.700" y="861.600" width="13.800" height="11.800" rx="1.500" fill="#b4cdef" stroke="#2b4a85" stroke-width="1.300"/>
<path stroke="#2b4a85" stroke-width="1.300" d="M734.600 861.600v11.800M727.700 867.500h13.800"/>
<rect x="729.8" y="863.7" width="2.800" height="1.800" fill="#8eadda"/>
<rect x="736.7" y="863.7" width="2.800" height="1.800" fill="#8eadda"/>
<rect x="729.8" y="869.6" width="2.800" height="1.800" fill="#8eadda"/>
<rect x="736.7" y="869.6" width="2.800" height="1.800" fill="#8eadda"/>
</svg>
<div id="timeline"></div>
<svg class="ico" style="top:886px" width="1113" height="41" viewBox="0 886 1113 41">
<g fill="#4a4a4a">
<path d="M10 903h2v14h-2zM22.400 903v14l-9.600-7z"/>
<path d="M34.300 910l9-6.500v13zM44.600 907h2.200v6h-2.200z"/>
<path d="M60.100 902.200l11.900 7.800-11.900 8z"/>
<path d="M96.900 910l-9-6.500v13zM84.200 907h2.200v6h-2.200z"/>
<path d="M120 903h2v14h-2zM109.700 903v14l9.600-7z"/>
</g>
<path stroke="#c4c4c4" stroke-width="2" fill="none" d="M152.200 926h361.600"/>
<path stroke="#c4c4c4" stroke-width="1.600" d="M153.0 920.200v6"/>
<g transform="translate(144.8 900.700)">
<path fill="none" stroke="#fff" stroke-width="2.600" stroke-opacity=".8" d="M3.200 1.700h9.100M1.600 3.400v8.800M13.700 3.400v3.800M3.200 13.700h4.400"/>
<path fill="none" stroke="#555" stroke-width="1.100" d="M3.200 1.700h9.100M1.600 3.400v8.800M13.700 3.400v3.800M3.200 13.700h4.400"/>
<g fill="#0a84e8" stroke="#fff" stroke-width=".6" stroke-opacity=".8"><rect x=".3" y=".4" width="2.200" height="2.200"/><rect x="13.200" y=".4" width="2.200" height="2.200"/><rect x=".3" y="13.200" width="2.200" height="2.200"/></g>
<path fill="#fcc040" stroke="#fff" stroke-width=".5" stroke-opacity=".8" d="M9.300 12.300l3.800-3.900 2.200 2.100-3.800 3.900z"/><ellipse cx="14.800" cy="9.500" rx="1.700" ry="1.200" transform="rotate(45 14.800 9.500)" fill="#ff3a3a"/><path fill="#666" d="M9.300 12.300l-1.700 3.700 3.900-1.600z"/>
</g>
<path stroke="#c4c4c4" stroke-width="1.600" d="M177.0 920.200v6"/>
<g transform="translate(168.8 900.700)">
<path fill="#fff" fill-opacity=".8" d="M-.4 3.400l3-3.600h10.200v10.600l-2.600 3z"/>
<path fill="#bdbdbd" d="M.2 14.400h9.500v1.600h-9.500z"/><path fill="#a6a6a6" d="M9.700 14.400l2.500-2.200v1.500l-2.500 2.300z"/>
<path fill="#6aaee2" d="M.2 3.700h9.500v9.300h-9.500z"/><path fill="#8fcaf7" d="M.2 3.700l2.600-3.400h9.400l-2.500 3.400z"/><path fill="#4b92cd" d="M9.700 3.700l2.500-3.400v9.700l-2.500 3z"/>
<path stroke="#222" stroke-width="1.100" d="M14.600 13.200v-10"/><path fill="#222" d="M14.600 1l2.100 3.400h-4.200z"/>
</g>
<path stroke="#c4c4c4" stroke-width="1.600" d="M201.0 920.200v6"/>
<g transform="translate(192.8 900.700)">
<path fill="none" stroke="#fff" stroke-width="2.600" stroke-opacity=".8" d="M3.200 1.700h9.100M1.600 3.400v8.800M13.700 3.400v3.800M3.200 13.700h4.400"/>
<path fill="none" stroke="#555" stroke-width="1.100" d="M3.200 1.700h9.100M1.600 3.400v8.800M13.700 3.400v3.800M3.200 13.700h4.400"/>
<g fill="#0a84e8" stroke="#fff" stroke-width=".6" stroke-opacity=".8"><rect x=".3" y=".4" width="2.200" height="2.200"/><rect x="13.200" y=".4" width="2.200" height="2.200"/><rect x=".3" y="13.200" width="2.200" height="2.200"/></g>
<path fill="#fcc040" stroke="#fff" stroke-width=".5" stroke-opacity=".8" d="M9.300 12.300l3.800-3.900 2.200 2.100-3.800 3.900z"/><ellipse cx="14.800" cy="9.500" rx="1.700" ry="1.200" transform="rotate(45 14.800 9.500)" fill="#ff3a3a"/><path fill="#666" d="M9.300 12.300l-1.700 3.700 3.900-1.600z"/>
</g>
<path stroke="#c4c4c4" stroke-width="1.600" d="M225.0 920.200v6"/>
<g transform="translate(216.8 900.700)">
<path fill="#fff" fill-opacity=".8" d="M-.4 3.400l3-3.600h10.200v10.600l-2.600 3z"/>
<path fill="#bdbdbd" d="M.2 14.400h9.500v1.600h-9.500z"/><path fill="#a6a6a6" d="M9.700 14.400l2.500-2.200v1.500l-2.500 2.300z"/>
<path fill="#6aaee2" d="M.2 3.700h9.500v9.300h-9.500z"/><path fill="#8fcaf7" d="M.2 3.700l2.600-3.400h9.400l-2.500 3.400z"/><path fill="#4b92cd" d="M9.700 3.700l2.500-3.400v9.700l-2.500 3z"/>
<path stroke="#222" stroke-width="1.100" d="M14.600 13.200v-10"/><path fill="#222" d="M14.600 1l2.100 3.400h-4.200z"/>
</g>
<path stroke="#c4c4c4" stroke-width="1.600" d="M249.0 920.200v6"/>
<g transform="translate(240.8 900.700)">
<path fill="#e0e0e0" d="M.5 5.600l4.800-5h2.800l-3.400 5v10.300h-4.200z"/>
<path fill="none" stroke="#444" stroke-width="1.100" stroke-linejoin="round" d="M4 15.900h-3.500v-10.300l4.800-5h2.800"/>
<path fill="#5bc486" stroke="#45b277" stroke-width=".5" d="M5.300 5.600l4.900-5v10.400l-4.900 5z"/><path fill="#e89c68" stroke="#d9884f" stroke-width=".5" d="M11.200 5.600l4.900-5v10.400l-4.900 5z"/>
</g>
<path stroke="#c4c4c4" stroke-width="1.600" d="M273.0 920.200v6"/>
<g transform="translate(264.8 900.700)">
<path fill="none" stroke="#fff" stroke-width="2.600" stroke-opacity=".8" d="M3.200 1.700h9.100M1.600 3.400v8.800M13.700 3.400v3.800M3.200 13.700h4.400"/>
<path fill="none" stroke="#555" stroke-width="1.100" d="M3.200 1.700h9.100M1.600 3.400v8.800M13.700 3.400v3.800M3.200 13.700h4.400"/>
<g fill="#0a84e8" stroke="#fff" stroke-width=".6" stroke-opacity=".8"><rect x=".3" y=".4" width="2.200" height="2.200"/><rect x="13.200" y=".4" width="2.200" height="2.200"/><rect x=".3" y="13.200" width="2.200" height="2.200"/></g>
<path fill="#fcc040" stroke="#fff" stroke-width=".5" stroke-opacity=".8" d="M9.300 12.300l3.800-3.900 2.200 2.100-3.800 3.900z"/><ellipse cx="14.800" cy="9.500" rx="1.700" ry="1.200" transform="rotate(45 14.800 9.500)" fill="#ff3a3a"/><path fill="#666" d="M9.300 12.300l-1.700 3.700 3.900-1.600z"/>
</g>
<path stroke="#c4c4c4" stroke-width="1.600" d="M297.0 920.200v6"/>
<g transform="translate(288.8 900.700)">
<path fill="#e0e0e0" d="M.5 5.600l4.800-5h2.800l-3.400 5v10.300h-4.200z"/>
<path fill="none" stroke="#444" stroke-width="1.100" stroke-linejoin="round" d="M4 15.900h-3.500v-10.300l4.800-5h2.800"/>
<path fill="#5bc486" stroke="#45b277" stroke-width=".5" d="M5.300 5.600l4.900-5v10.400l-4.900 5z"/><path fill="#e89c68" stroke="#d9884f" stroke-width=".5" d="M11.200 5.600l4.900-5v10.400l-4.900 5z"/>
</g>
<path stroke="#c4c4c4" stroke-width="1.600" d="M321.0 920.200v6"/>
<g transform="translate(312.8 900.700)">
<path fill="none" stroke="#fff" stroke-width="2.600" stroke-opacity=".8" d="M3.200 1.700h9.100M1.600 3.400v8.800M13.700 3.400v3.800M3.200 13.700h4.400"/>
<path fill="none" stroke="#555" stroke-width="1.100" d="M3.200 1.700h9.100M1.600 3.400v8.800M13.700 3.400v3.800M3.200 13.700h4.400"/>
<g fill="#0a84e8" stroke="#fff" stroke-width=".6" stroke-opacity=".8"><rect x=".3" y=".4" width="2.200" height="2.200"/><rect x="13.200" y=".4" width="2.200" height="2.200"/><rect x=".3" y="13.200" width="2.200" height="2.200"/></g>
<path fill="#fcc040" stroke="#fff" stroke-width=".5" stroke-opacity=".8" d="M9.300 12.300l3.800-3.900 2.200 2.100-3.800 3.900z"/><ellipse cx="14.800" cy="9.500" rx="1.700" ry="1.200" transform="rotate(45 14.800 9.500)" fill="#ff3a3a"/><path fill="#666" d="M9.300 12.300l-1.700 3.700 3.900-1.600z"/>
</g>
<path stroke="#c4c4c4" stroke-width="1.600" d="M345.0 920.200v6"/>
<g transform="translate(336.8 900.700)">
<path fill="#fff" fill-opacity=".8" d="M-.4 3.400l3-3.600h10.200v10.600l-2.600 3z"/>
<path fill="#bdbdbd" d="M.2 14.400h9.500v1.600h-9.500z"/><path fill="#a6a6a6" d="M9.700 14.400l2.500-2.200v1.500l-2.500 2.300z"/>
<path fill="#6aaee2" d="M.2 3.700h9.500v9.300h-9.500z"/><path fill="#8fcaf7" d="M.2 3.700l2.600-3.400h9.400l-2.500 3.400z"/><path fill="#4b92cd" d="M9.700 3.700l2.500-3.400v9.700l-2.500 3z"/>
<path stroke="#222" stroke-width="1.100" d="M14.600 13.200v-10"/><path fill="#222" d="M14.600 1l2.100 3.400h-4.200z"/>
</g>
<path stroke="#c4c4c4" stroke-width="1.600" d="M369.0 920.200v6"/>
<g transform="translate(360.8 900.700)">
<path fill="#fff" fill-opacity=".8" d="M-.4 3.400l3-3.600h10.200v10.600l-2.600 3z"/>
<path fill="#bdbdbd" d="M.2 14.400h9.500v1.600h-9.500z"/><path fill="#a6a6a6" d="M9.700 14.400l2.500-2.200v1.500l-2.500 2.300z"/>
<path fill="#6aaee2" d="M.2 3.700h9.500v9.300h-9.500z"/><path fill="#8fcaf7" d="M.2 3.700l2.600-3.400h9.400l-2.500 3.400z"/><path fill="#4b92cd" d="M9.700 3.700l2.500-3.400v9.700l-2.500 3z"/>
<path stroke="#222" stroke-width="1.100" d="M14.600 13.200v-10"/><path fill="#222" d="M14.600 1l2.100 3.400h-4.200z"/>
</g>
<path stroke="#c4c4c4" stroke-width="1.600" d="M393.0 920.200v6"/>
<g transform="translate(384.8 900.700)">
<path fill="#e0e0e0" d="M.5 5.600l4.800-5h2.800l-3.400 5v10.300h-4.200z"/>
<path fill="none" stroke="#444" stroke-width="1.100" stroke-linejoin="round" d="M4 15.900h-3.500v-10.300l4.800-5h2.800"/>
<path fill="#5bc486" stroke="#45b277" stroke-width=".5" d="M5.300 5.600l4.900-5v10.400l-4.900 5z"/><path fill="#e89c68" stroke="#d9884f" stroke-width=".5" d="M11.200 5.600l4.900-5v10.400l-4.900 5z"/>
</g>
<path stroke="#c4c4c4" stroke-width="1.600" d="M417.0 920.200v6"/>
<g transform="translate(408.8 900.700)">
<path fill="none" stroke="#fff" stroke-width="2.600" stroke-opacity=".8" d="M3.200 1.700h9.100M1.600 3.400v8.800M13.700 3.400v3.800M3.200 13.700h4.400"/>
<path fill="none" stroke="#555" stroke-width="1.100" d="M3.200 1.700h9.100M1.600 3.400v8.800M13.700 3.400v3.800M3.200 13.700h4.400"/>
<g fill="#0a84e8" stroke="#fff" stroke-width=".6" stroke-opacity=".8"><rect x=".3" y=".4" width="2.200" height="2.200"/><rect x="13.200" y=".4" width="2.200" height="2.200"/><rect x=".3" y="13.200" width="2.200" height="2.200"/></g>
<path fill="#fcc040" stroke="#fff" stroke-width=".5" stroke-opacity=".8" d="M9.300 12.300l3.800-3.900 2.200 2.100-3.800 3.900z"/><ellipse cx="14.800" cy="9.500" rx="1.700" ry="1.200" transform="rotate(45 14.800 9.500)" fill="#ff3a3a"/><path fill="#666" d="M9.300 12.300l-1.700 3.700 3.900-1.600z"/>
</g>
<path stroke="#c4c4c4" stroke-width="1.600" d="M441.0 920.200v6"/>
<g transform="translate(432.8 900.700)">
<path fill="#e0e0e0" d="M.5 5.600l4.800-5h2.800l-3.400 5v10.300h-4.200z"/>
<path fill="none" stroke="#444" stroke-width="1.100" stroke-linejoin="round" d="M4 15.900h-3.500v-10.300l4.800-5h2.800"/>
<path fill="#5bc486" stroke="#45b277" stroke-width=".5" d="M5.300 5.600l4.900-5v10.400l-4.900 5z"/><path fill="#e89c68" stroke="#d9884f" stroke-width=".5" d="M11.200 5.600l4.900-5v10.400l-4.900 5z"/>
</g>
<path stroke="#c4c4c4" stroke-width="1.600" d="M465.0 920.200v6"/>
<g transform="translate(456.8 900.700)">
<path fill="none" stroke="#fff" stroke-width="2.600" stroke-opacity=".8" d="M3.200 1.700h9.100M1.600 3.400v8.800M13.700 3.400v3.800M3.200 13.700h4.400"/>
<path fill="none" stroke="#555" stroke-width="1.100" d="M3.200 1.700h9.100M1.600 3.400v8.800M13.700 3.400v3.800M3.200 13.700h4.400"/>
<g fill="#0a84e8" stroke="#fff" stroke-width=".6" stroke-opacity=".8"><rect x=".3" y=".4" width="2.200" height="2.200"/><rect x="13.200" y=".4" width="2.200" height="2.200"/><rect x=".3" y="13.200" width="2.200" height="2.200"/></g>
<path fill="#fcc040" stroke="#fff" stroke-width=".5" stroke-opacity=".8" d="M9.300 12.300l3.800-3.900 2.200 2.100-3.800 3.900z"/><ellipse cx="14.800" cy="9.500" rx="1.700" ry="1.200" transform="rotate(45 14.800 9.500)" fill="#ff3a3a"/><path fill="#666" d="M9.300 12.300l-1.700 3.700 3.900-1.600z"/>
</g>
<path stroke="#c4c4c4" stroke-width="1.600" d="M489.0 920.200v6"/>
<g transform="translate(480.8 900.700)">
<path fill="#fff" fill-opacity=".8" d="M-.4 3.400l3-3.600h10.200v10.600l-2.600 3z"/>
<path fill="#bdbdbd" d="M.2 14.400h9.500v1.600h-9.500z"/><path fill="#a6a6a6" d="M9.700 14.400l2.500-2.200v1.500l-2.500 2.300z"/>
<path fill="#6aaee2" d="M.2 3.700h9.500v9.300h-9.500z"/><path fill="#8fcaf7" d="M.2 3.700l2.600-3.400h9.400l-2.500 3.400z"/><path fill="#4b92cd" d="M9.700 3.700l2.500-3.400v9.700l-2.500 3z"/>
<path stroke="#222" stroke-width="1.100" d="M14.600 13.200v-10"/><path fill="#222" d="M14.600 1l2.100 3.400h-4.200z"/>
</g>
<path stroke="#c4c4c4" stroke-width="1.600" d="M513.0 920.200v6"/>
<g transform="translate(504.8 900.700)">
<path fill="#fff" fill-opacity=".8" d="M-.4 3.400l3-3.600h10.200v10.600l-2.600 3z"/>
<path fill="#bdbdbd" d="M.2 14.400h9.500v1.600h-9.500z"/><path fill="#a6a6a6" d="M9.700 14.400l2.500-2.200v1.500l-2.500 2.300z"/>
<path fill="#6aaee2" d="M.2 3.700h9.500v9.300h-9.500z"/><path fill="#8fcaf7" d="M.2 3.700l2.600-3.400h9.400l-2.500 3.400z"/><path fill="#4b92cd" d="M9.700 3.700l2.500-3.400v9.700l-2.500 3z"/>
<path stroke="#222" stroke-width="1.100" d="M14.600 13.200v-10"/><path fill="#222" d="M14.600 1l2.100 3.400h-4.200z"/>
</g>
<path fill="#606060" stroke="#fff" stroke-opacity=".7" stroke-width=".8" d="M518.800 895.300h12.400v3.500l-5 4.800h-2.400l-5-4.800z"/><path stroke="#606060" stroke-width="2" d="M525 900v27"/>
</svg>
</body></html>
